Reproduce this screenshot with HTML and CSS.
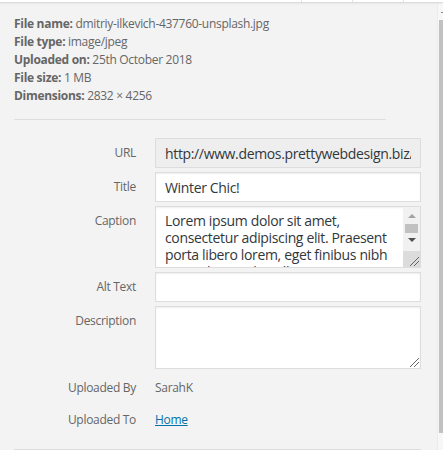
FILE: index.html
```html
<!DOCTYPE html>
<html lang="en">
<head>
<meta charset="utf-8">
<title>Attachment details</title>
<link rel="stylesheet" href="styles.css">
</head>
<body>
<div class="top">
  <span class="cell c1"></span><span class="cell c2"></span><span class="cell c3"></span><span class="cell c4"></span>
</div>
<div class="frame">
  <div class="panel">
    <div class="details">
      <div class="line"><strong>File name:</strong> dmitriy-ilkevich-437760-unsplash.jpg</div>
      <div class="line"><strong>File type:</strong> image/jpeg</div>
      <div class="line"><strong>Uploaded on:</strong> 25th October 2018</div>
      <div class="line"><strong>File size:</strong> 1 MB</div>
      <div class="line"><strong>Dimensions:</strong> 2832 × 4256</div>
    </div>
    <div class="settings">
      <label class="setting">
        <span class="name">URL</span>
        <input class="field readonly" type="text" value="http://www.demos.prettywebdesign.biz/wp-content/uploads/2018/10/dmitriy-ilkevich-437760-unsplash.jpg" readonly>
      </label>
      <label class="setting">
        <span class="name">Title</span>
        <input class="field" type="text" value="Winter Chic!">
      </label>
      <div class="setting">
        <span class="name">Caption</span>
        <div class="fake-area">
          <div class="area-text">Lorem ipsum dolor sit amet,<br>consectetur adipiscing elit. Praesent<br>porta libero lorem, eget finibus nibh<br>mattis lacus. Phasellus sit amet</div>
          <div class="area-scroll">
            <span class="arrow up"></span>
            <span class="thumb"></span>
            <span class="arrow down"></span>
            <span class="corner"><span class="grip"></span></span>
          </div>
        </div>
      </div>
      <label class="setting">
        <span class="name">Alt Text</span>
        <input class="field" type="text" value="">
      </label>
      <div class="setting">
        <span class="name">Description</span>
        <div class="fake-area desc">
          <div class="area-text"></div>
          <span class="grip solo"></span>
        </div>
      </div>
      <div class="setting text">
        <span class="name">Uploaded By</span>
        <span class="value">SarahK</span>
      </div>
      <div class="setting text">
        <span class="name">Uploaded To</span>
        <span class="value"><a href="#" class="link">Home</a></span>
      </div>
    </div>
    <div class="bottom-rule"></div>
  </div>
  <div class="vscroll">
    <span class="vmark"></span>
    <span class="vthumb"></span>
  </div>
</div>
</body>
</html>
```

FILE: styles.css
```css
* { box-sizing: border-box; }

html, body {
  margin: 0;
  padding: 0;
  height: 100%;
  overflow: hidden;
}

body {
  background: #f3f3f3;
  font-family: "Open Sans", "Noto Sans", sans-serif;
  color: #666;
  font-size: 12px;
  letter-spacing: -0.3px;
}

.top {
  display: flex;
  height: 3px;
  background: #fff;
  border-bottom: 1px solid #dcdcdc;
  box-shadow: 0 1px 2px rgba(0, 0, 0, 0.05);
  position: relative;
  z-index: 1;
}

.cell { border-right: 1px solid #e2e2e2; height: 2px; }
.c1 { width: 302px; }
.c2 { width: 51px; }
.c3 { width: 51px; }
.c4 { flex: 1; border-right: 0; }

.frame {
  display: flex;
  height: 447px;
}

.panel {
  flex: 1;
  padding: 12px 16px 0 14px;
}

.details {
  width: 372px;
  padding-bottom: 14px;
  border-bottom: 1px solid #ddd;
  margin-bottom: 18px;
}

.line {
  line-height: 18px;
  white-space: nowrap;
}

.line strong {
  font-weight: 700;
}

.settings {
  display: flex;
  flex-direction: column;
  gap: 4px;
}

.setting {
  display: grid;
  grid-template-columns: 122px 266px;
  column-gap: 19px;
  align-items: start;
}

.name {
  text-align: right;
  line-height: 18px;
  padding-top: 6px;
  color: #666;
}

.field {
  height: 30px;
  width: 266px;
  margin: 0;
  border: 1px solid #ddd;
  background: #fff;
  box-shadow: inset 0 1px 2px rgba(0, 0, 0, 0.07);
  padding: 0 9px;
  font-family: "Open Sans", "Noto Sans", sans-serif;
  font-size: 14px;
  letter-spacing: -0.35px;
  color: #32373c;
  outline: none;
}

.field.readonly {
  background: #eee;
  box-shadow: none;
}

.fake-area {
  display: flex;
  height: 62px;
  border: 1px solid #ddd;
  background: #fff;
  box-shadow: inset 0 1px 2px rgba(0, 0, 0, 0.07);
  overflow: hidden;
  position: relative;
}

.fake-area.desc { height: 63px; }

.area-text {
  flex: 1;
  padding: 5px 9px 0;
  font-size: 14px;
  letter-spacing: -0.35px;
  line-height: 17px;
  color: #32373c;
  white-space: nowrap;
  overflow: hidden;
}

.area-scroll {
  width: 17px;
  background: #f1f1f1;
  display: flex;
  flex-direction: column;
  align-items: center;
}

.arrow {
  width: 0;
  height: 0;
  border-left: 4px solid transparent;
  border-right: 4px solid transparent;
}

.arrow.up {
  margin-top: 7px;
  border-bottom: 4px solid #a3a3a3;
}

.thumb {
  margin-top: 6px;
  width: 13px;
  height: 9px;
  background: #c1c1c1;
}

.arrow.down {
  margin-top: 5px;
  border-top: 4px solid #505050;
}

.corner {
  margin-top: auto;
  width: 17px;
  height: 16px;
  background: #dcdcdc;
  position: relative;
}

.grip {
  position: absolute;
  right: 1px;
  bottom: 1px;
  width: 9px;
  height: 9px;
  background:
    linear-gradient(135deg, transparent 46%, #666 46%, #666 54%, transparent 54%) right bottom / 9px 9px no-repeat,
    linear-gradient(135deg, transparent 46%, #666 46%, #666 54%, transparent 54%) right bottom / 5px 5px no-repeat;
}

.setting.text .name,
.setting.text .value {
  padding-top: 6px;
  padding-bottom: 4px;
  line-height: 18px;
}

.value {
  color: #666;
}

.link {
  color: #0073aa;
  text-decoration: underline;
}

.bottom-rule {
  margin-top: 16px;
  width: 407px;
  border-top: 1px solid #ddd;
}

.vscroll {
  width: 6px;
  background: #f7f7f7;
  display: flex;
  flex-direction: column;
  align-items: flex-end;
  border-left: 1px solid #ececec;
}

.vmark {
  margin-top: 9px;
  width: 2px;
  height: 1px;
  background: #888;
}

.vthumb {
  margin-top: 7px;
  width: 4px;
  height: 413px;
  background: #c1c1c1;
}
```
